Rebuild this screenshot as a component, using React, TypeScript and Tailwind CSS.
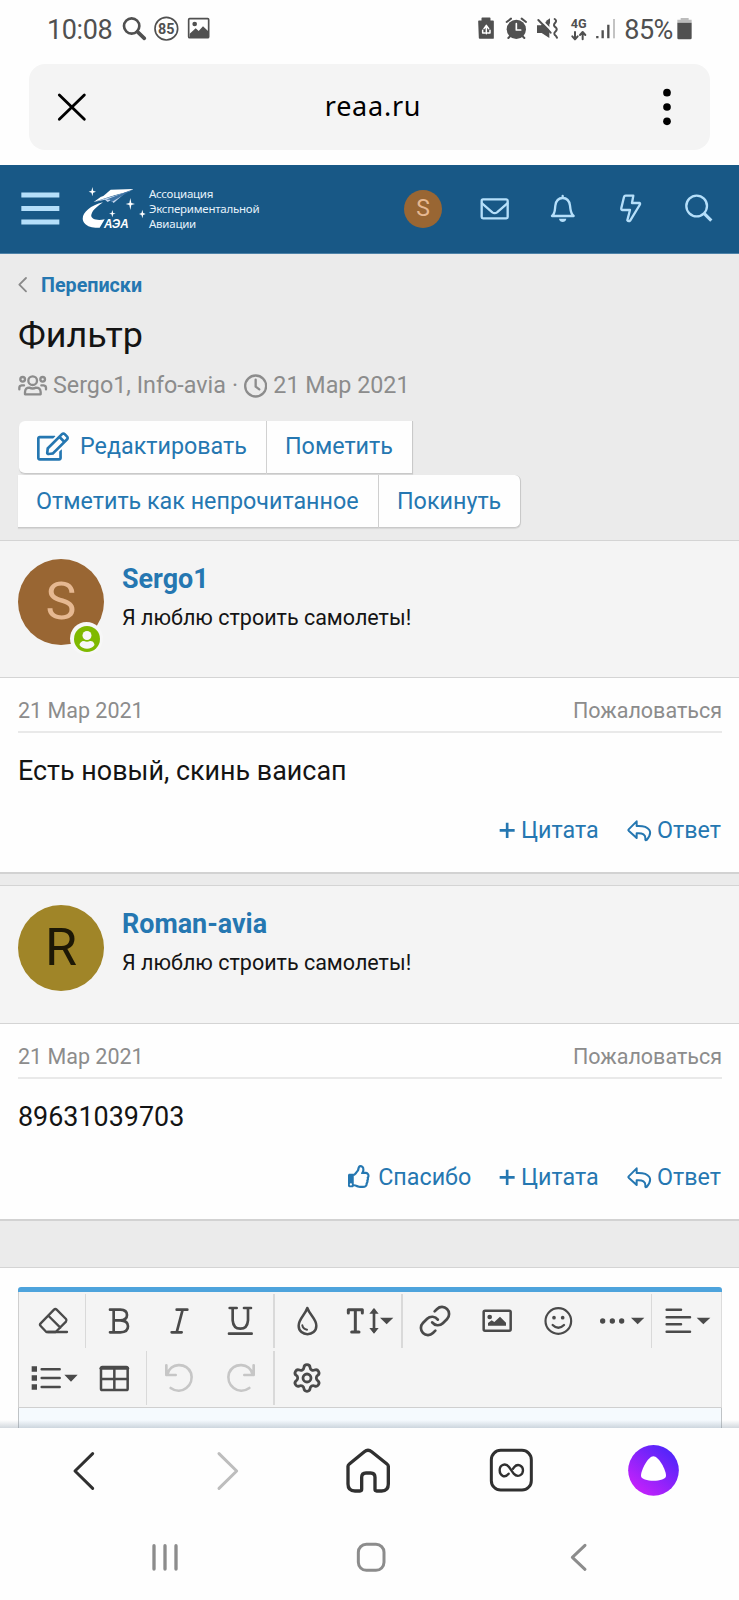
import type { ReactNode } from "react";
import { Link as LinkIcon, Settings } from "lucide-react";
import { FaRegEdit, FaRegSmile, FaRegThumbsUp } from "react-icons/fa";

type DrawingProps = {
  box: [number, number, number, number];
  className?: string;
  children: ReactNode;
};

/* A drawing on a fine grid: three grid units make one pixel. */
function Drawing({ box, className = "", children }: DrawingProps) {
  return (
    <svg
      width={box[2] / 3}
      height={box[3] / 3}
      viewBox={box.join(" ")}
      className={"shrink-0 " + className}
      fill="none"
      stroke="currentColor"
      strokeLinecap="round"
      strokeLinejoin="round"
    >
      {children}
    </svg>
  );
}

function StatusBar() {
  return (
    <div className="flex h-16 items-start pt-[9px] text-[#505050]">
      <div className="mt-px ml-[47px] flex h-10 w-[65px] items-center text-[27px] tracking-[-0.4px]">10:08</div>
      <Drawing box={[366, 27, 270, 120]} className="ml-[10px]">
        <circle cx="395" cy="78" r="23" strokeWidth="8" />
        <path d="M412 95 L433 115" strokeWidth="11" />
        <circle cx="499" cy="86" r="34" strokeWidth="5" />
        <text x="499" y="101" textAnchor="middle" fontSize="43" fontWeight="700" fill="currentColor" stroke="none">85</text>
        <rect x="566" y="56" width="60" height="57" rx="3" strokeWidth="5" />
        <circle cx="584" cy="72" r="7" fill="currentColor" stroke="none" />
        <path d="M569 101 L587 85 L596 93 L609 79 L624 93 V112 H569 Z" fill="currentColor" stroke="none" />
      </Drawing>
      <Drawing box={[321, 27, 430, 120]} className="ml-[264px]">
        <path d="M330 64 H340 V55 H362 V64 H372 V114 H332 Z" fill="currentColor" strokeWidth="5" />
        <path d="M345 86 L352 76 L359 86 M341 91 V99 H348 M363 91 V99 H356 M352 79 V101" stroke="#fff" strokeWidth="4.500" />
        <circle cx="442" cy="88" r="29" fill="currentColor" stroke="none" />
        <path d="M442 71 V90 H455" stroke="#fff" strokeWidth="5" />
        <path d="M413 66 L426 56 M458 56 L471 66 M418 114 L424 108 M466 114 L460 108" strokeWidth="6" />
        <path d="M504 76 H516 L541 60 V114 L518 99 H504 Z" fill="currentColor" stroke="none" />
        <path d="M513 57 L548 92" stroke="#fff" strokeWidth="6" />
        <path d="M508 60 L545 98" strokeWidth="6" />
        <path d="M530 64 L543 55 V72 Z" fill="currentColor" stroke="none" />
        <path d="M557 57 Q565 62 558 69 Q551 76 560 82 Q567 88 559 95 Q552 102 561 108 L564 113" strokeWidth="6" />
        <text x="629" y="83" textAnchor="middle" fontSize="38" fontWeight="700" fill="currentColor" stroke="none">4G</text>
        <path d="M618 96 V117 M610 109 L618 118 L626 109 M641 118 V98 M633 105 L641 96 L649 105" strokeWidth="6" />
        <path d="M685 108 V115 M701 91 V115 M718 74 V115" strokeWidth="7" strokeLinecap="butt" />
        <path d="M735 57 V115" strokeWidth="6" stroke="#c3c3c3" strokeLinecap="butt" />
      </Drawing>
      <div className="mt-px ml-[5px] flex h-10 w-[50px] items-center text-[27px] tracking-[-0.6px]">85%</div>
      <Drawing box={[924, 27, 51, 120]} className="ml-[2px]">
        <path d="M928 68 V59 H938 V54 H962 V59 H971 V68 Z" fill="#bcbcbc" stroke="none" />
        <path d="M928 68 H971 V114 Q971 118 967 118 H932 Q928 118 928 114 Z" fill="currentColor" stroke="none" />
      </Drawing>
    </div>
  );
}

function AddressBar() {
  return (
    <div className="mr-[29px] ml-[29px] flex h-[86px] items-center justify-between rounded-[16px] bg-[#f4f4f4] text-black">
      <Drawing box={[171, 274, 90, 92]} className="ml-[28px]">
        <path d="M178 283 L253 356 M253 283 L178 356" strokeWidth="8.500" />
      </Drawing>
      <div className="mb-[2px] ml-[-2px] font-['Noto_Sans'] text-[27px] tracking-[0.75px]">reaa.ru</div>
      <Drawing box={[876, 257, 36, 126]} className="mr-[37px]">
        <g fill="currentColor" stroke="none">
          <circle cx="894" cy="277" r="11.5" />
          <circle cx="894" cy="320" r="11.5" />
          <circle cx="894" cy="363" r="11.5" />
        </g>
      </Drawing>
    </div>
  );
}

function SiteHeader() {
  return (
    <div className="mt-[15px] flex h-[89px] items-center border-b border-[#4d82a8] bg-[#185886] text-[#b5dffa]">
      <Drawing box={[63, 97, 117, 105]} className="ml-[21px]">
        <path d="M64 106 H178 M64 146.500 H178 M64 187 H178" strokeWidth="15" strokeLinecap="butt" />
      </Drawing>
      <Drawing box={[240, 80, 204, 138]} className="ml-[20px] text-white">
        <g fill="#fff" stroke="none">
          <path d="M309 129 C262 140 237 171 253 191 C263 204 283 206 299 205 L314 180 C288 185 271 178 274 166 C278 150 296 139 309 129 Z" />
          <path d="M332 91 L400 89 L386 97 L303 116 Z" />
          <path d="M281 128 L378 99 L341 131 L332 123 L323 128 L315 121 Z" fill="#c3d5ee" />
          <path d="M400 89 L334 129 L330 121 L318 121 Z" fill="#3c72a4" />
          <path d="M400 89 L281 128 L303 112 Z" />
          <path d="M277 83 L279.500 94 L288 97 L279.500 100 L277 111 L274.500 100 L266 97 L274.500 94 Z" />
          <path d="M391 116 L394 131 L405 134 L394 137 L391 152 L388 137 L377 134 L388 131 Z" />
          <path d="M337 152 L339.500 161 L347 163 L339.500 165 L337 174 L334.500 165 L327 163 L334.500 161 Z" />
          <path d="M427 151 L429.500 161 L437 164 L429.500 167 L427 177 L424.500 167 L417 164 L424.500 161 Z" />
          <text x="312" y="207" fontFamily="Liberation Sans" fontWeight="700" fontStyle="italic" fontSize="36" textLength="74" lengthAdjust="spacingAndGlyphs">АЭА</text>
        </g>
      </Drawing>
      <div className="mb-[2px] ml-[1px] w-[255px] font-['Noto_Sans'] text-[11.5px] leading-[15px] tracking-[-0.24px] text-[#e6f2fb]">
        <div>Ассоциация</div>
        <div>Экспериментальной</div>
        <div>Авиации</div>
      </div>
      <div className="flex size-[38px] shrink-0 items-center justify-center rounded-full bg-[#996633] text-[23px] text-[#e6b891]">S</div>
      <Drawing box={[330, 97, 720, 100]} className="ml-[37px]">
        <rect x="338" y="119" width="78" height="57" rx="4" strokeWidth="7" />
        <path d="M339 131 L370 158 Q377 163 384 158 L415 131" strokeWidth="7" />
        <path d="M581 109 V115 M549 169 H614 C604 161 605 151 603 138 C601 123 593 115 581 115 C569 115 561 123 559 138 C557 151 559 161 549 169 Z" strokeWidth="7" />
        <path d="M570 177 H592 C590 190 572 190 570 177 Z" fill="currentColor" stroke="none" />
        <path d="M770 108 H793 L789 130 H811 Q815 131 812 136 L784 182 Q779 187 775 182 L783 151 H760 Q756 150 757 145 L765 112 Q766 108 770 108 Z" strokeWidth="7" />
        <circle cx="983" cy="139" r="31" strokeWidth="7" />
        <path d="M1006 162 L1027 183" strokeWidth="9.500" strokeLinecap="butt" />
      </Drawing>
    </div>
  );
}

function Heading() {
  return (
    <div className="h-[286px] bg-[#ebebeb] pl-[18px]">
      <div className="flex h-[62px] items-center">
        <Drawing box={[54, 350, 36, 52]} className="text-[#8a8a8a]">
          <path d="M78 356 L58 376 L78 396" strokeWidth="5.500" />
        </Drawing>
        <a className="mt-[2px] ml-[11px] text-[19.7px] font-bold text-[#2577b1]">Переписки</a>
      </div>
      <h1 className="flex h-[40px] items-center text-[35.9px] text-[#141414]">Фильтр</h1>
      <div className="flex h-[60px] items-center pb-px text-[23.3px] whitespace-pre text-[#8c8c8c]">
        <Drawing box={[54, 640, 90, 70]}>
          <g strokeWidth="7">
            <circle cx="98" cy="660" r="13" />
            <path d="M75 701 V694 Q76 681 88 681 Q98 686 108 681 Q121 681 122 694 V701 Z" />
            <circle cx="68" cy="656" r="7" />
            <circle cx="128" cy="656" r="7" />
            <path d="M58 686 V681 Q58 675 65 674 H72 M138 686 V681 Q138 675 131 674 H124" />
          </g>
        </Drawing>
        <span className="ml-[5px] w-[179px]">Sergo1, Info-avia</span>
        <span className="w-[12px]">·</span>
        <Drawing box={[731, 638, 70, 72]}>
          <circle cx="766" cy="674" r="31.500" strokeWidth="7" />
          <path d="M766 655 V676 L777 684" strokeWidth="7" />
        </Drawing>
        <span className="ml-[6px]">21 Мар 2021</span>
      </div>
      <div className="mt-[5px] ml-px flex text-[23.3px] text-[#2577b1]">
        <button className="flex h-[53px] w-[248px] items-center rounded-l-[6px] border-r border-b border-r-[#cfcfcf] border-b-[#c9c9c9] bg-[#fefefe] pl-[18px] shadow-[0_1px_1px_#d8d8d8]">
          <FaRegEdit className="mb-[2px] h-[29px] w-[32px]" />
          <span className="mb-[1px] ml-[11px]">Редактировать</span>
        </button>
        <button className="flex h-[53px] w-[146px] items-center border-r border-b border-[#c9c9c9] bg-[#fefefe] pb-[1px] pl-[18px] shadow-[0_1px_1px_#d8d8d8]">
          Пометить
        </button>
      </div>
      <div className="mt-[1px] flex text-[23.3px] text-[#2577b1]">
        <button className="flex h-[53px] w-[361px] items-center border-r border-b border-r-[#cfcfcf] border-b-[#c9c9c9] bg-[#fefefe] pt-px pl-[18px] shadow-[0_1px_1px_#d8d8d8]">
          Отметить как непрочитанное
        </button>
        <button className="flex h-[53px] w-[142px] items-center rounded-r-[6px] border-r border-b border-[#c9c9c9] bg-[#fefefe] pt-px pl-[18px] shadow-[0_1px_1px_#d8d8d8]">
          Покинуть
        </button>
      </div>
    </div>
  );
}

type MemberProps = { letter: string; name: string; avatar: string; size: string; online?: boolean };

function Member({ letter, name, avatar, size, online }: MemberProps) {
  return (
    <div className={"flex border-t border-b border-[#d4d4d4] bg-[#f4f4f4] pl-[18px] " + size}>
      <div className={"relative flex size-[86px] items-center justify-center rounded-full text-[52px] " + avatar}>
        {letter}
        {online && (
          <div className="absolute top-[63px] left-[52px] flex size-[33px] items-center justify-center rounded-full bg-[#f7f7f7]">
            <svg width="26" height="26" viewBox="0 0 26 26">
              <circle cx="13" cy="13" r="13" fill="#7fb900" />
              <circle cx="13" cy="9.500" r="4.500" fill="#f7f7f7" />
              <path d="M5.500 19 C6 15.500 9 15 10 15 Q13 16.500 16 15 C18 15 20 15.500 20.500 19 C17 24 9 24 5.500 19 Z" fill="#f7f7f7" />
            </svg>
          </div>
        )}
      </div>
      <div className="ml-[18px]">
        <div className="flex h-[40px] items-center text-[26.9px] font-bold text-[#2577b1]">{name}</div>
        <div className="flex h-[38px] items-center text-[21.5px] text-[#141414]">Я люблю строить самолеты!</div>
      </div>
    </div>
  );
}

function Post({ message, thanks }: { message: string; thanks?: boolean }) {
  return (
    <div className={"border-b-2 border-[#d2d2d2] bg-[#fefefe] pr-[17px] pl-[18px] " + (thanks ? "h-[197px]" : "h-[196px]")}>
      <div className="flex h-[55px] items-center justify-between border-b-2 border-[#e9e9e9] pt-[13px] text-[21.5px] text-[#8c8c8c]">
        <span>21 Мар 2021</span>
        <span>Пожаловаться</span>
      </div>
      <div className={"flex items-center text-[26.9px] text-[#141414] " + (thanks ? "h-[77px]" : "h-[76px]")}>{message}</div>
      <div className="flex h-[43px] items-center justify-end pr-[1px] text-[23.3px] text-[#2577b1]">
        {thanks && (
          <>
            <FaRegThumbsUp className="mb-[3px] size-[23px]" />
            <span className="mr-[28px] ml-[7px]">Спасибо</span>
          </>
        )}
        <Drawing box={[178, 455, 50, 50]}>
          <path d="M180 480 H225 M202.500 457 V503" strokeWidth="8" strokeLinecap="butt" />
        </Drawing>
        <span className="mr-[28px] ml-[5px]">Цитата</span>
        <Drawing box={[560, 444, 76, 72]}>
          <path d="M589 451 L565 475 Q563 477 565 479 L589 501 V487 C607 486 617 490 615 506 Q616 509 619 507 C640 483 628 463 589 465 Z" strokeWidth="6" />
        </Drawing>
        <span className="ml-[5px]">Ответ</span>
      </div>
    </div>
  );
}

function Separator() {
  return <div className="mx-[2px] h-[54px] w-[1.6px] shrink-0 bg-[#d9d9d9]" />;
}

function Tool({ x, y, w = 183, children }: { x: number; y: number; w?: number; children: ReactNode }) {
  return (
    <button className="flex h-[54px] shrink-0 items-center">
      <Drawing box={[x, y, w, 162]}>{children}</Drawing>
    </button>
  );
}

function Editor() {
  return (
    <div className="h-[161px] overflow-hidden border-t border-[#d4d4d4] bg-[#fefefe] pt-[18.5px] pr-[17px] pl-[18px]">
      <div className="h-[5px] rounded-t-[3px] bg-[#4da3dc]" />
      <div className="h-[116px] border-x border-b border-[#cfcfcf] border-r-[#dcdcdc] bg-[#f4f4f4] pt-[2px] text-[#4a4a4a]">
        <div className="flex pl-[2.5px]">
          <Tool x={63} y={101}>
            <g strokeWidth="7">
              <path d="M167 148 L195 176 Q198 180 195 184 L164 215 H136 L119 197 Q115 193 119 189 L159 148 Q163 144 167 148 Z M143 167 L178 202" />
              <path d="M140 215 H198" />
            </g>
          </Tool>
          <Separator />
          <Tool x={265} y={101}>
            <path d="M331 148 H362 Q382 149 382 164 Q382 179 362 180 H342 M362 180 Q385 181 385 198 Q385 216 362 216 H331 M342 148 V216" strokeWidth="8" />
          </Tool>
          <Tool x={448} y={101}>
            <path d="M531 148 H563 M516 216 H546 M549 148 L531 216" strokeWidth="8" />
          </Tool>
          <Tool x={631} y={101}>
            <path d="M690 143 H711 M733 143 H754 M699 143 V180 Q701 205 722 205 Q743 205 745 180 V143 M688 220 H756" strokeWidth="8" />
          </Tool>
          <Separator />
          <Tool x={830} y={101}>
            <path d="M921 143 C914 164 895 176 895 196 C895 230 948 230 948 196 C948 176 928 164 921 143 Z" strokeWidth="7.500" />
            <path d="M906 195 Q908 206 920 208" strokeWidth="6" />
          </Tool>
          <Tool x={1013} y={101} w={184}>
            <path d="M1044 158 V148 H1086 V158 M1065 148 V215 M1054 215 H1076" strokeWidth="9" />
            <path d="M1121 149 V213" strokeWidth="8" />
            <path d="M1121 143 L1135 160 H1107 Z M1121 220 L1135 203 H1107 Z M1139 172 H1179 L1159 192 Z" fill="currentColor" stroke="none" />
          </Tool>
          <Separator />
          <button className="flex h-[54px] w-[61px] shrink-0 items-center justify-center">
            <LinkIcon className="size-[34px]" strokeWidth={1.9} />
          </button>
          <Tool x={287} y={101}>
            <rect x="340" y="151" width="81" height="60" rx="4" strokeWidth="7.500" />
            <circle cx="358" cy="170" r="7" fill="currentColor" stroke="none" />
            <path d="M353 196 V188 L364 180 L372 185 L389 169 L407 187 V196 Z" fill="currentColor" stroke="none" />
          </Tool>
          <Tool x={470} y={101}>
            <circle cx="564" cy="182" r="38.500" strokeWidth="6.500" />
            <circle cx="551" cy="172" r="5.500" fill="currentColor" stroke="none" />
            <circle cx="577" cy="172" r="5.500" fill="currentColor" stroke="none" />
            <path d="M547 194 Q564 211 581 194" strokeWidth="7" />
          </Tool>
          <Tool x={652} y={101}>
            <g fill="currentColor" stroke="none">
              <circle cx="696" cy="182" r="8" />
              <circle cx="725" cy="182" r="8" />
              <circle cx="753" cy="182" r="8" />
              <path d="M781 172 H821 L801 192 Z" />
            </g>
          </Tool>
          <Separator />
          <Tool x={852} y={101}>
            <path d="M890 148 H933 M890 171 H960 M890 192 H933 M890 214 H960" strokeWidth="7.500" />
            <path d="M980 172 H1021 L1000 192 Z" fill="currentColor" stroke="none" />
          </Tool>
        </div>
        <div className="mt-[3px] flex pl-[2.5px]">
          <Tool x={63} y={272}>
            <path d="M92 318 H108 V334 H92 Z M92 345 H108 V361 H92 Z M92 372 H108 V388 H92 Z M190 343 H230 L210 364 Z" fill="currentColor" stroke="none" />
            <path d="M122 327 H176 M122 353 H176 M122 380 H176" strokeWidth="7.500" />
          </Tool>
          <Tool x={246} y={272}>
            <rect x="300" y="320" width="80" height="69" rx="4" strokeWidth="7.500" />
            <path d="M300 324 H380" strokeWidth="9" />
            <path d="M301 356 H379 M340 327 V388" strokeWidth="7.500" />
          </Tool>
          <Separator />
          <Tool x={447} y={272}>
            <path d="M499 315 V344 H527 M502 342 C511 307 558 305 573 338 C584 374 545 407 512 383" strokeWidth="8" stroke="#c6c6c6" />
          </Tool>
          <Tool x={630} y={272}>
            <path d="M761 315 V344 H733 M758 342 C749 307 702 305 687 338 C676 374 715 407 748 383" strokeWidth="8" stroke="#c6c6c6" />
          </Tool>
          <Separator />
          <button className="flex h-[54px] w-[61px] shrink-0 items-center justify-center">
            <Settings className="size-[32px]" strokeWidth={2.1} />
          </button>
        </div>
      </div>
      <div className="h-[21px] border-x border-[#bfc3c6] bg-[#f5fafe]" />
    </div>
  );
}

function BrowserBar() {
  return (
    <div className="relative h-[172px] bg-[#fefefe]">
      <div className="absolute inset-x-0 top-[-8px] h-[8px] bg-linear-to-b from-[#8090a000] to-[#8090a058]" />
      <div className="flex h-[85px] items-center text-[#303030]">
        <Drawing box={[215, 90, 72, 126]} className="ml-[72px]">
          <path d="M277 101 L224 153 L277 205" strokeWidth="9" />
        </Drawing>
        <Drawing box={[648, 90, 72, 126]} className="ml-[120px] text-[#bdbdbd]">
          <path d="M657 101 L710 153 L657 205" strokeWidth="9" />
        </Drawing>
        <Drawing box={[1035, 80, 140, 142]} className="ml-[105px]">
          <path d="M1044 138 Q1044 134 1048 131 L1093 94 Q1104 85 1115 94 L1161 131 Q1165 134 1165 138 V191 Q1165 212 1145 212 H1130 Q1125 212 1125 207 V171 Q1125 158 1112 158 H1098 Q1085 158 1085 171 V207 Q1085 212 1080 212 H1065 Q1044 212 1044 191 Z" strokeWidth="10" />
        </Drawing>
        <Drawing box={[357, 82, 140, 140]} className="ml-[96px]">
          <rect x="367" y="92" width="120" height="119" rx="28" strokeWidth="9" />
          <path d="M419 162 C407 177 392 168 392 152 C392 134 410 129 420 142 L434 162 C445 174 462 168 462 152 C462 136 445 131 436 142 L432 147" strokeWidth="7" />
        </Drawing>
        <svg className="ml-[94px] shrink-0" width="51" height="51" viewBox="777 76 153 153">
          <defs>
            <linearGradient id="assistant" x1="0.15" y1="0.9" x2="0.8" y2="0.1">
              <stop offset="0" stopColor="#c521fb" />
              <stop offset="1" stopColor="#5325fa" />
            </linearGradient>
          </defs>
          <circle cx="853.500" cy="152" r="76" fill="url(#assistant)" />
          <path d="M853 110 C869 110 891 151 891 168 C891 188 816 188 816 168 C816 151 838 110 853 110 Z" fill="#fff" />
        </svg>
      </div>
      <div className="flex h-[89px] items-center text-[#8c8c8c]">
        <Drawing box={[450, 367, 90, 92]} className="ml-[150px]">
          <path d="M462 378 V448 M495 378 V448 M528 378 V448" strokeWidth="10" />
        </Drawing>
        <Drawing box={[1065, 364, 96, 98]} className="ml-[175px]">
          <rect x="1075" y="374" width="77" height="78" rx="24" strokeWidth="9" />
        </Drawing>
        <Drawing box={[600, 367, 60, 92]} className="ml-[182px]">
          <path d="M648 377 L610 413 L648 449" strokeWidth="9" />
        </Drawing>
      </div>
    </div>
  );
}

export default function App() {
  return (
    <div className="h-[1600px] w-[739px] overflow-hidden bg-[#fefefe] font-[Roboto,sans-serif]">
      <StatusBar />
      <AddressBar />
      <SiteHeader />
      <Heading />
      <Member letter="S" name="Sergo1" avatar="bg-[#996633] text-[#e6b891]" size="h-[138px] pt-[18px]" online />
      <Post message="Есть новый, скинь ваисап" />
      <div className="h-[11px] bg-[#ebebeb]" />
      <Member letter="R" name="Roman-avia" avatar="bg-[#a08528] text-[#1d1806]" size="h-[139px] pt-[18.5px]" />
      <Post message="89631039703" thanks />
      <div className="h-[46px] bg-[#ebebeb]" />
      <Editor />
      <BrowserBar />
    </div>
  );
}
